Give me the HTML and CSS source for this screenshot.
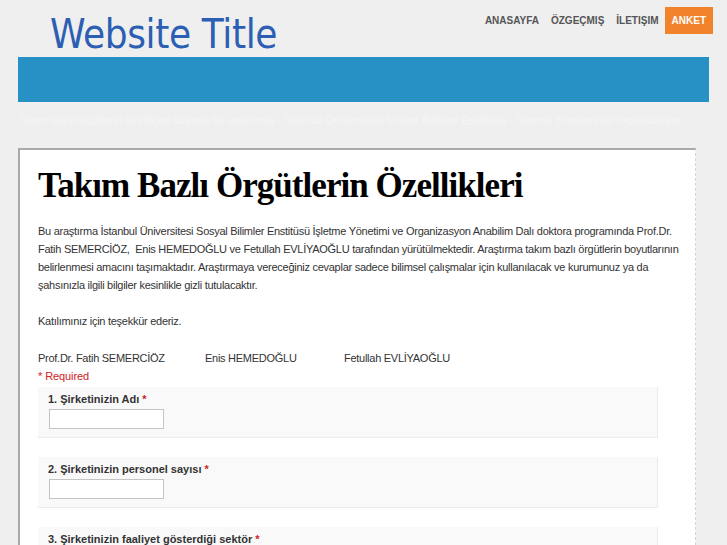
FILE: index.html
```html
<!DOCTYPE html>
<html lang="tr">
<head>
<meta charset="utf-8">
<title>Website Title</title>
<link rel="stylesheet" href="styles.css">
</head>
<body>
<header class="top">
  <div class="site-title">Website Title</div>
  <nav class="nav">
    <a class="nav-item">ANASAYFA</a>
    <a class="nav-item">ÖZGEÇMIŞ</a>
    <a class="nav-item">İLETIŞIM</a>
    <a class="nav-item active">ANKET</a>
  </nav>
</header>
<div class="banner"></div>
<div class="tagline">Takım bazlı örgütlerin özellikleri üzerine bir araştırma · İstanbul Üniversitesi Sosyal Bilimler Enstitüsü · İşletme Yönetimi ve Organizasyon</div>
<main class="card">
  <h1 class="form-title">Takım Bazlı Örgütlerin Özellikleri</h1>
  <p class="intro">Bu araştırma İstanbul Üniversitesi Sosyal Bilimler Enstitüsü İşletme Yönetimi ve Organizasyon Anabilim Dalı doktora programında Prof.Dr.<br>Fatih SEMERCİÖZ,&nbsp; Enis HEMEDOĞLU ve Fetullah EVLİYAOĞLU tarafından yürütülmektedir. Araştırma takım bazlı örgütlerin boyutlarının<br>belirlenmesi amacını taşımaktadır. Araştırmaya vereceğiniz cevaplar sadece bilimsel çalışmalar için kullanılacak ve kurumunuz ya da<br>şahsınızla ilgili bilgiler kesinlikle gizli tutulacaktır.</p>
  <p class="intro">Katılımınız için teşekkür ederiz.</p>
  <p class="intro signers"><span class="signer s1">Prof.Dr. Fatih SEMERCİÖZ</span><span class="signer s2">Enis HEMEDOĞLU</span><span class="signer">Fetullah EVLİYAOĞLU</span></p>
  <div class="required">* Required</div>
  <div class="question">
    <label class="q-label">1. Şirketinizin Adı <span class="star">*</span></label>
    <input class="q-input" type="text">
  </div>
  <div class="question">
    <label class="q-label">2. Şirketinizin personel sayısı <span class="star">*</span></label>
    <input class="q-input" type="text">
  </div>
  <div class="question">
    <label class="q-label">3. Şirketinizin faaliyet gösterdiği sektör <span class="star">*</span></label>
    <input class="q-input" type="text">
  </div>
</main>
</body>
</html>
```
FILE: styles.css
```css
html, body {
  margin: 0;
  padding: 0;
}
body {
  background: #efefef;
  font-family: "Liberation Sans", Arial, sans-serif;
  color: #333;
  height: 545px;
  overflow: hidden;
}
.top {
  display: flex;
  justify-content: space-between;
  align-items: flex-start;
  padding: 0 14px 0 50px;
  height: 57px;
}
.site-title {
  font-family: "DejaVu Sans Condensed", "DejaVu Sans", sans-serif;
  font-size: 40px;
  color: #2c5fb3;
  line-height: 1;
  margin-top: 14px;
  letter-spacing: -0.35px;
}
.nav {
  display: flex;
  align-items: center;
  margin-top: 7px;
}
.nav-item {
  font-family: "Liberation Sans", Arial, sans-serif;
  font-weight: bold;
  font-size: 10px;
  color: #555;
  padding: 0 6px;
  height: 27px;
  line-height: 27px;
}
.nav-item.active {
  background: #f1832b;
  color: #fff;
  padding: 0 7px;
}
.banner {
  margin-left: 18px;
  width: 691px;
  height: 45px;
  background: #2790c4;
}
.tagline {
  margin: 11px 0 0 18px;
  font-size: 11px;
  color: #f5f5f7;
  line-height: 14px;
  height: 14px;
  white-space: nowrap;
}
.card {
  margin: 21px 0 0 18px;
  width: 678px;
  background: #fff;
  border-top: 2px solid #a9a9a9;
  border-left: 2px solid #a9a9a9;
  border-right: 1px dashed #d4d4d8;
  padding: 16px 37px 0 18px;
  box-sizing: border-box;
  height: 397px;
  overflow: hidden;
}
.form-title {
  font-family: "Liberation Serif", "Times New Roman", serif;
  font-weight: bold;
  font-size: 35px;
  letter-spacing: -0.95px;
  color: #000;
  margin: 0 0 16px 0;
  line-height: 40px;
}
.intro {
  font-size: 11px;
  letter-spacing: -0.27px;
  line-height: 18px;
  margin: 0 0 18px 0;
  color: #333;
  white-space: nowrap;
}
.signers {
  margin-bottom: 0;
  padding-top: 1px;
  display: flex;
}
.signer.s1 { width: 167px; }
.signer.s2 { width: 139px; }
.required {
  color: #d0211b;
  font-size: 11px;
  letter-spacing: -0.1px;
  line-height: 18px;
}
.question {
  background: #f9f9f9;
  border-right: 1px solid #ebebeb;
  border-bottom: 1px solid #ebebeb;
  padding: 5px 10px 8px 10px;
  margin-bottom: 19px;
  display: flex;
  flex-direction: column;
  align-items: flex-start;
}
.required + .question {
  margin-top: 2px;
}
.q-label {
  font-weight: bold;
  font-size: 11px;
  line-height: 15px;
  color: #333;
  margin-bottom: 2px;
}
.star {
  color: #d0211b;
}
.q-input {
  width: 115px;
  height: 20px;
  box-sizing: border-box;
  border: 1px solid #c4c4c4;
  background: #fff;
  margin: 0 0 0 1px;
  padding: 0;
}
```
